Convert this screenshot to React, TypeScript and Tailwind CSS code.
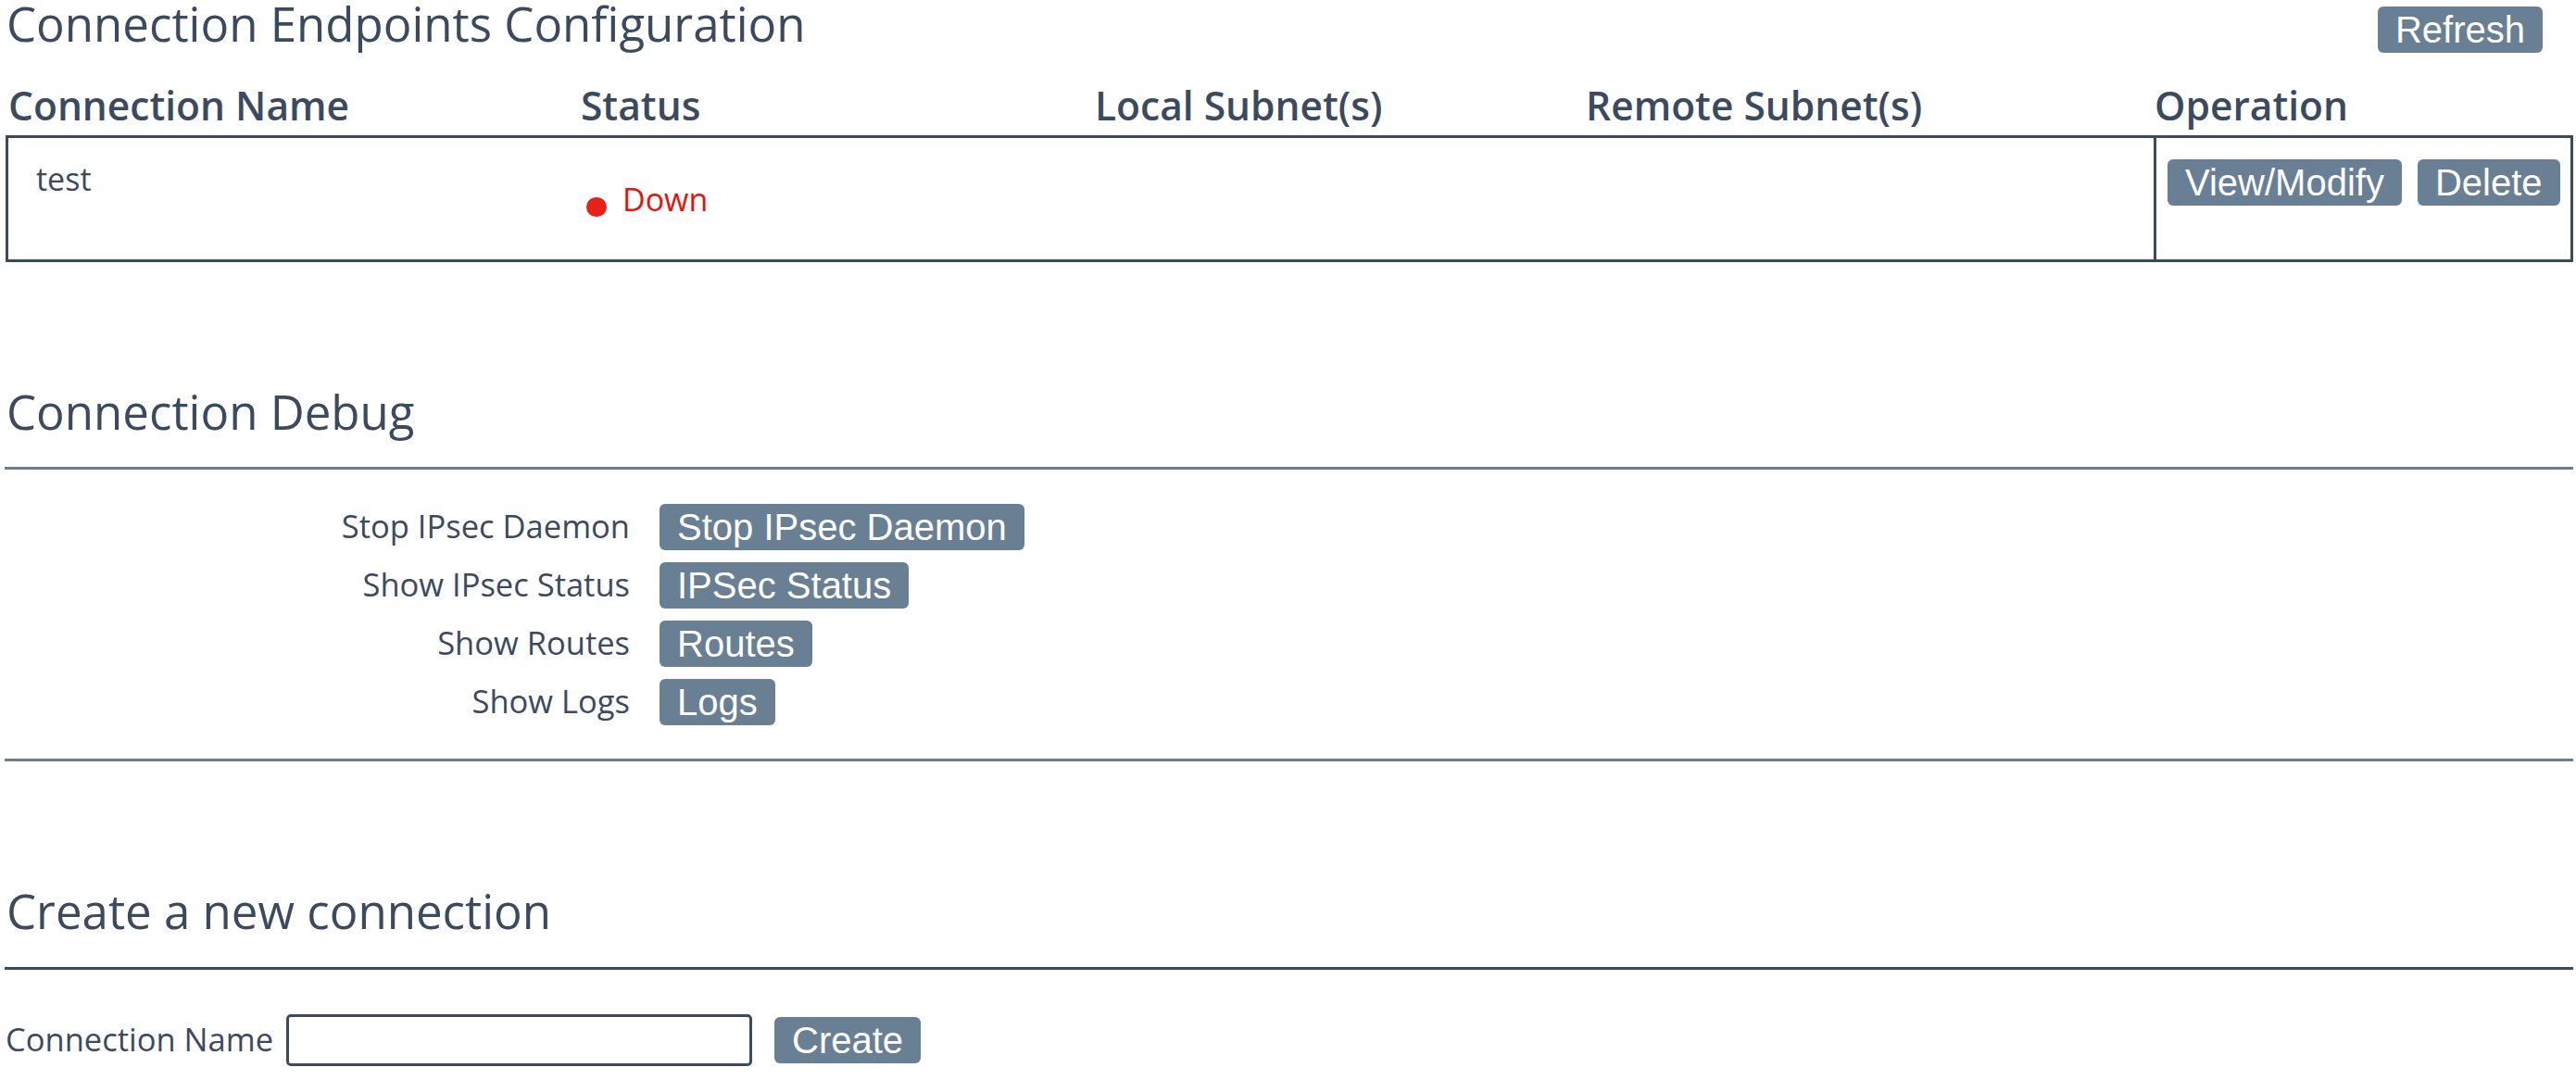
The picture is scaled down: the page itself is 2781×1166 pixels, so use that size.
import { FC } from "react";

const Btn: FC<{ label: string }> = ({ label }) => (
  <button className="h-[50px] px-[19px] rounded-[6px] bg-[#687f94] text-white text-[40px] leading-none font-['Liberation_Sans',Arial,sans-serif] flex items-center justify-center shrink-0">
    {label}
  </button>
);

const debugRows = [
  { label: "Stop IPsec Daemon", btn: "Stop IPsec Daemon" },
  { label: "Show IPsec Status", btn: "IPSec Status" },
  { label: "Show Routes", btn: "Routes" },
  { label: "Show Logs", btn: "Logs" },
];

const App: FC = () => {
  return (
    <div className="min-h-[1166px] bg-white text-[#3b4a5f] font-['Open_Sans','Noto_Sans',sans-serif] pl-[5px] pr-[3px]">
      {/* endpoints */}
      <section>
        <div className="flex justify-between items-start">
          <h2 className="text-[51px] leading-none font-normal pl-[2px]">Connection Endpoints Configuration</h2>
          <div className="mt-[7px] mr-[33px]">
            <Btn label="Refresh" />
          </div>
        </div>

        <div className="grid grid-cols-[619px_555px_530px_615px_1fr] mt-[36px] text-[42.5px] font-semibold leading-none">
          <div className="pl-[4px]">Connection Name</div>
          <div className="pl-[3px]">Status</div>
          <div className="pl-[3px]">Local Subnet(s)</div>
          <div className="pl-[3px]">Remote Subnet(s)</div>
          <div className="pl-[2px]">Operation</div>
        </div>

        <div className="mt-[10px] ml-[1px] h-[137px] border-[3px] border-[#3b4a5f] grid grid-cols-[619px_555px_530px_612px_1fr] text-[34px] leading-none">
          <div className="pl-[30px] pt-[27px]">test</div>
          <div className="pt-[49px] flex items-start">
            <span className="inline-block w-[22px] h-[21px] rounded-full bg-[#e8201a] mt-[15px] ml-[5px]" />
            <span className="ml-[17px] text-[#e3140e]">Down</span>
          </div>
          <div />
          <div />
          <div className="border-l-[3px] border-[#3b4a5f] pl-[12px] pt-[23px] flex items-start gap-[17px]">
            <Btn label="View/Modify" />
            <Btn label="Delete" />
          </div>
        </div>
      </section>

      {/* debug */}
      <section className="mt-[136px]">
        <h2 className="text-[51px] leading-none font-normal pl-[2px]">Connection Debug</h2>
        <div className="mt-[34px] h-[3px] bg-[#687f94]" />
        <div className="pt-[37px] pb-[36px] flex flex-col gap-[13px]">
          {debugRows.map((r) => (
            <div key={r.label} className="flex items-center gap-[32px]">
              <div className="w-[675px] text-right text-[34.5px] leading-none">{r.label}</div>
              <Btn label={r.btn} />
            </div>
          ))}
        </div>
        <div className="h-[3px] bg-[#687f94]" />
      </section>

      {/* create */}
      <section className="mt-[136px]">
        <h2 className="text-[51px] leading-none font-normal pl-[2px]">Create a new connection</h2>
        <div className="mt-[35px] h-[3px] bg-[#3b4a5f]" />
        <div className="mt-[48px] flex items-center">
          <label className="text-[34.5px] leading-none pl-[1px]">Connection Name</label>
          <input
            type="text"
            className="ml-[14px] w-[503px] h-[56px] border-[3px] border-[#3b4a5f] rounded-[5px] outline-none px-2 text-[30px]"
          />
          <div className="ml-[24px]">
            <Btn label="Create" />
          </div>
        </div>
      </section>
    </div>
  );
};

export default App;
